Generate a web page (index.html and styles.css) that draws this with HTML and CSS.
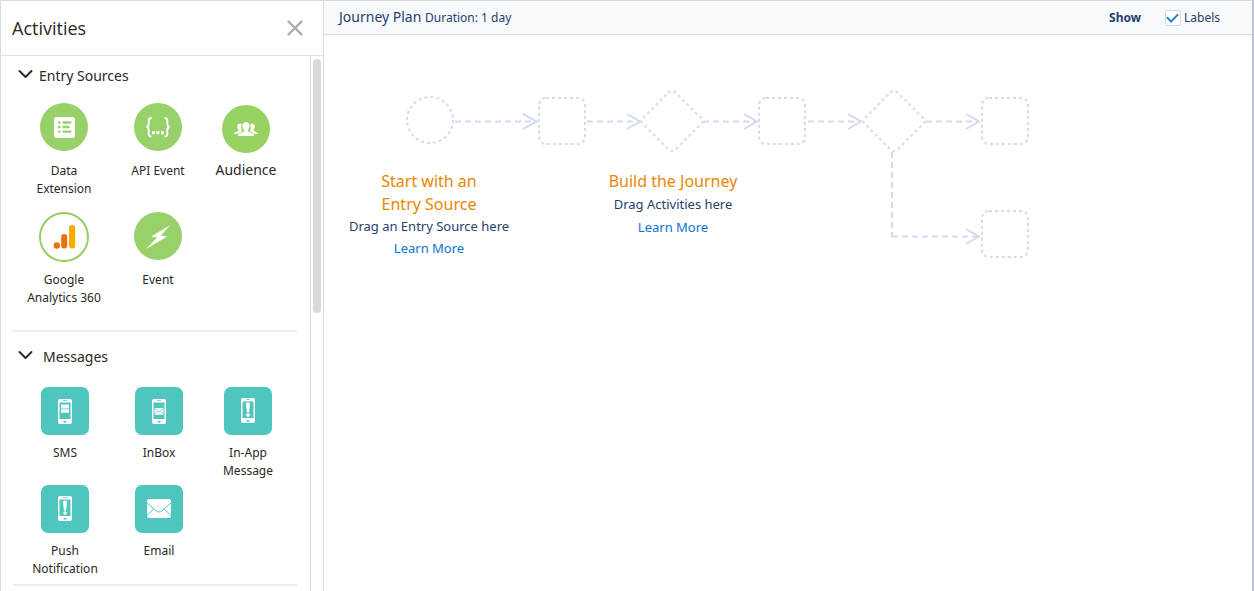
FILE: index.html
```html
<!DOCTYPE html>
<html lang="en">
<head>
<meta charset="utf-8">
<title>Journey Builder</title>
<link rel="stylesheet" href="styles.css">
</head>
<body>
<svg class="defs" aria-hidden="true">
  <defs>
    <symbol id="phone" viewBox="0 0 48 48">
      <path fill="#fff" fill-rule="evenodd" d="M19 12h10a2 2 0 0 1 2 2v21a2 2 0 0 1-2 2H19a2 2 0 0 1-2-2V14a2 2 0 0 1 2-2zM18.500 15.500v16.500h11V15.500zM22 13.300v.8h4v-.8zM22.500 34v1.500h3V34z"/>
    </symbol>
    <symbol id="alert" viewBox="0 0 48 48">
      <use href="#phone" y="-1"/>
      <path fill="#fff" d="M24 15.500c1.400 0 2.100.8 2 2.200l-1 7.800h-2l-1-7.800c-.1-1.400.6-2.200 2-2.200z"/>
      <circle cx="24" cy="28" r="1.800" fill="#fff"/>
    </symbol>
    <symbol id="chevron" viewBox="0 0 16 10">
      <path d="M2.500 2l6 6 6-6" fill="none" stroke="#2b2826" stroke-width="2" stroke-linecap="round" stroke-linejoin="round"/>
    </symbol>
  </defs>
</svg>
<div class="app">
  <aside class="sidebar">
    <header class="sidebar-head">
      <h1>Activities</h1>
      <button class="close" type="button" aria-label="Close">
        <svg width="16" height="16" viewBox="0 0 16 16"><path d="M1.500 1.500l13 13M14.500 1.500l-13 13" stroke="#aeacab" stroke-width="2.400" stroke-linecap="round"/></svg>
      </button>
    </header>
    <div class="sidebar-body">
      <div class="panels">
        <section class="panel">
          <h2><button class="toggle" type="button" aria-expanded="true"><svg width="16" height="10"><use href="#chevron"/></svg>Entry Sources</button></h2>
          <ul class="tiles entry">
            <li>
              <svg class="icon" viewBox="0 0 48 48"><circle cx="24" cy="24" r="24" fill="#98d06a"/><rect x="14" y="14" width="21" height="21" rx="2.500" fill="#fff"/><g stroke="#98d06a" stroke-width="2.400" stroke-linecap="round"><path d="M19 19.500h.4M19 24h.4M19 28.600h.4M23.500 19.500h6.800M23.500 24h5M23.500 28.600h6.800"/></g></svg>
              <span>Data Extension</span>
            </li>
            <li>
              <svg class="icon" viewBox="0 0 48 48"><circle cx="24" cy="24" r="24" fill="#98d06a"/><path d="M17.500 15c-2.400 0-2.800.8-2.800 2.600v3.200c0 2-.8 3-2.200 3.200 1.400.2 2.200 1.200 2.200 3.200v3.700c0 1.800.4 2.600 2.800 2.600M30.500 15c2.400 0 2.800.8 2.800 2.600v3.200c0 2 .8 3 2.200 3.200-1.400.2-2.200 1.200-2.200 3.200v3.700c0 1.800-.4 2.600-2.800 2.600" fill="none" stroke="#fff" stroke-width="1.900"/><path d="M18 28.300h3v3h-3zM22.500 28.300h3v3h-3zM27 28.300h3v3h-3z" fill="#fff"/></svg>
              <span>API Event</span>
            </li>
            <li class="large">
              <svg class="icon" viewBox="0 0 48 48"><circle cx="24" cy="24" r="24" fill="#96d161"/><g fill="#fff"><path d="M24 17c2 0 3.500 1.500 3.500 3.800 0 1.800-.7 3.200-1.700 4.200v1.400l5.200 2.300c.7.400 1 .8 1 2.300H16c0-1.500.3-1.900 1-2.300l5.200-2.300V25c-1-1-1.700-2.400-1.700-4.200 0-2.300 1.500-3.800 3.500-3.800z"/><path d="M18 18.600c-1.700 0-2.800 1.100-2.800 3 0 1.300.5 2.400 1.200 3.100v1l-3.400 1.800c-.8.500-1 .7-1 1.600h3l5.200-2.700c-.9-1-1.200-4.800-.4-7.200-.5-.4-1.100-.6-1.800-.6zM30 18.600c1.700 0 2.800 1.100 2.800 3 0 1.300-.5 2.400-1.200 3.100v1l3.400 1.800c.8.500 1 .7 1 1.600h-3l-5.200-2.700c.9-1 1.200-4.800.4-7.200.5-.4 1.100-.6 1.800-.6z"/></g></svg>
              <span>Audience</span>
            </li>
            <li class="ringed">
              <svg class="icon" viewBox="0 0 50 50"><circle cx="25" cy="25" r="24" fill="#fff" stroke="#92cf60" stroke-width="2"/><rect x="22.200" y="22" width="6" height="14.500" rx="3" fill="#e8710a"/><rect x="30" y="13" width="6.200" height="23.500" rx="3" fill="#f9ab00"/><circle cx="17.800" cy="33.500" r="3.200" fill="#e8710a"/></svg>
              <span>Google Analytics 360</span>
            </li>
            <li>
              <svg class="icon" viewBox="0 0 48 48"><circle cx="24" cy="24" r="24" fill="#98d06a"/><path d="M36 13.300L18.800 23.600q-2.200 1.200.3 1.500l4 .3L12 37l20-11.700q1.600-1-.5-1.300l-4.700-.6z" fill="#fff"/></svg>
              <span>Event</span>
            </li>
          </ul>
        </section>
        <section class="panel messages">
          <h2><button class="toggle" type="button" aria-expanded="true"><svg width="16" height="10"><use href="#chevron"/></svg>Messages</button></h2>
          <ul class="tiles">
            <li>
              <svg class="icon square" viewBox="0 0 48 48"><use href="#phone"/><path d="M20 17.500h8v4h-8zM20 22.300h8v3.500h-8z" fill="#fff"/></svg>
              <span>SMS</span>
            </li>
            <li>
              <svg class="icon square" viewBox="0 0 48 48"><use href="#phone"/><rect x="19.500" y="21" width="9" height="6.700" fill="#fff"/><path d="M19.500 21.500l4.500 3.500 4.500-3.500M19.500 27.300l3-3M28.500 27.300l-3-3" fill="none" stroke="#4fc6bd" stroke-width=".7"/></svg>
              <span>InBox</span>
            </li>
            <li>
              <svg class="icon square" viewBox="0 0 48 48"><use href="#alert"/></svg>
              <span>In-App Message</span>
            </li>
            <li>
              <svg class="icon square" viewBox="0 0 48 48"><use href="#alert"/></svg>
              <span>Push Notification</span>
            </li>
            <li>
              <svg class="icon square" viewBox="0 0 48 48"><rect x="12" y="14" width="24" height="19" rx="2" fill="#fff"/><path d="M11.500 17.500l9.500 8.300c2 1.600 4 1.600 6 0l9.500-8.300M12 30.500l6.600-6.300M36 30.500l-6.600-6.300" fill="none" stroke="#4fc6bd"/></svg>
              <span>Email</span>
            </li>
          </ul>
        </section>
      </div>
      <div class="scrollbar"><div class="thumb"></div></div>
    </div>
  </aside>
  <main class="main">
    <header class="toolbar">
      <h2 class="plan">Journey Plan <small>Duration: 1 day</small></h2>
      <div class="show">
        <strong>Show</strong>
        <label class="check"><input type="checkbox" checked>Labels</label>
      </div>
    </header>
    <div class="canvas">
      <svg class="flow" width="720" height="240" viewBox="324 35 720 240" fill="none" stroke="#d4daf1" stroke-width="2">
        <g stroke-dasharray="3 3">
          <circle cx="430" cy="120" r="23"/>
          <rect x="539" y="98" width="46" height="46" rx="7"/>
          <rect x="759" y="98" width="46" height="46" rx="7"/>
          <rect x="982" y="98" width="46" height="46" rx="7"/>
          <rect x="982" y="211" width="46" height="46" rx="7"/>
          <path d="M668 93q4-4 8 0l25 25q4 3 0 6l-25 25q-4 4-8 0l-25-25q-3-3 0-6z"/>
          <path d="M890 93q4-4 8 0l25 25q4 3 0 6l-25 25q-4 4-8 0l-25-25q-3-3 0-6z"/>
        </g>
        <path stroke-dasharray="6 4" d="M455 121.500h82M587 121.500h53M703 121.500h55M808 121.500h53M926 121.500h53M892 152v85M892 236.500h87"/>
        <path d="M523 114l14 7.500-14 7.500M627 114l13 7.500-13 7.500M744 114l13 7.500-13 7.500M848 114l13 7.500-13 7.500M966 114l13 7.500-13 7.500M966 229l13 7.500-13 7.500"/>
      </svg>
      <div class="hint start">
        <h3>Start with an<br>Entry Source</h3>
        <p>Drag an Entry Source here</p>
        <a href="#">Learn More</a>
      </div>
      <div class="hint build">
        <h3>Build the Journey</h3>
        <p>Drag Activities here</p>
        <a href="#">Learn More</a>
      </div>
    </div>
  </main>
</div>
</body>
</html>
```
FILE: styles.css
```css
* { box-sizing: border-box; }
body {
  margin: 0;
  font-family: "Noto Sans", sans-serif;
  color: #2b2826;
  background: #fff;
}
h1, h2, h3, p, ul { margin: 0; padding: 0; font-weight: 400; }
ul { list-style: none; }
button { border: 0; padding: 0; background: none; font: inherit; color: inherit; cursor: pointer; }
svg { display: block; }
.defs { position: absolute; width: 0; height: 0; }
.app {
  display: grid;
  grid-template-columns: 323px 1fr;
  height: 100vh;
  overflow: hidden;
  border: 1px solid #d8dade;
  border-right: 2px solid #b9c4d8;
  border-bottom: 0;
}
.sidebar {
  display: flex;
  flex-direction: column;
  min-height: 0;
  border-right: 1px solid #d9d9de;
}
.sidebar-head {
  display: flex;
  align-items: center;
  justify-content: space-between;
  height: 55px;
  flex: none;
  padding: 0 20px 0 11px;
  border-bottom: 1px solid #e0e1e5;
}
.sidebar-head h1 { font-size: 18px; line-height: 24px; }
.sidebar-head h1 { font-family: "Open Sans", sans-serif; }
.sidebar-body { display: flex; flex: 1; min-height: 0; }
.panels { flex: 1; overflow: hidden; padding: 0 13px 0 12px; }
.scrollbar { width: 13px; border-left: 1px solid #d9d9de; padding: 3px 2px 0; }
.thumb { height: 254px; border-radius: 4px; background: #d9d8dd; }
.panel { padding: 8px 0 23px; border-bottom: 2px solid #ececf3; }
.panel h2 { font-size: 14px; line-height: 24px; }
.toggle { display: flex; align-items: center; gap: 6px; padding-left: 4px; }
.toggle svg { margin-bottom: 4px; }
.tiles {
  display: grid;
  grid-template-columns: 94px 94px 84px;
  row-gap: 5px;
  padding: 18px 0 0 5px;
}
.tiles li {
  display: flex;
  flex-direction: column;
  align-items: center;
  gap: 9px;
  text-align: center;
  font-size: 12px;
  line-height: 18px;
}
.tiles span { max-width: 80px; }
.icon { width: 48px; height: 48px; flex: none; }
.icon.square { border-radius: 7px; background: #4fc6bd; }
.tiles.entry { grid-template-columns: 94px 94px 82px; row-gap: 14px; padding: 15px 0 0 4px; }
.tiles.entry li { gap: 11px; }
.tiles.entry .large { font-size: 14px; padding-top: 2px; gap: 8px; }
.tiles.entry .ringed { gap: 9px; }
.ringed .icon { width: 50px; height: 50px; }
.messages { padding: 13px 0 6px; }
.messages .toggle { gap: 10px; }
.main { display: flex; flex-direction: column; min-width: 0; }
.toolbar {
  display: flex;
  align-items: center;
  justify-content: space-between;
  height: 34px;
  padding: 0 32px 0 15px;
  background: #f7f9fb;
  border-bottom: 1px solid #d8dade;
  color: #26406b;
}
.plan { font-size: 14px; line-height: 20px; }
.plan small { font-size: 12px; }
.show { display: flex; align-items: center; gap: 24px; font-size: 12px; line-height: 18px; }
.check { display: flex; align-items: center; gap: 3px; }
.check input {
  appearance: none;
  width: 16px;
  height: 16px;
  margin: 0;
  display: grid;
  place-items: center;
  border: 1px solid #d8d8d8;
  border-radius: 2px;
  background: #fff;
}
.check input:checked::before {
  content: "";
  width: 9px;
  height: 5px;
  margin-bottom: 3px;
  border: solid #1b7fd6;
  border-width: 0 0 2px 2px;
  transform: rotate(-45deg);
}
.canvas { position: relative; flex: 1; }
.hint {
  position: absolute;
  width: 200px;
  text-align: center;
  font-size: 13px;
  line-height: 22px;
  color: #26406b;
}
.start { left: 5px; top: 135px; }
.build { left: 249px; top: 135px; }
.hint h3 { font-size: 16px; line-height: 23px; color: #ea8600; }
.start p { line-height: 20px; }
.hint a { line-height: 24px; color: #0b74cf; text-decoration: none; }
```
